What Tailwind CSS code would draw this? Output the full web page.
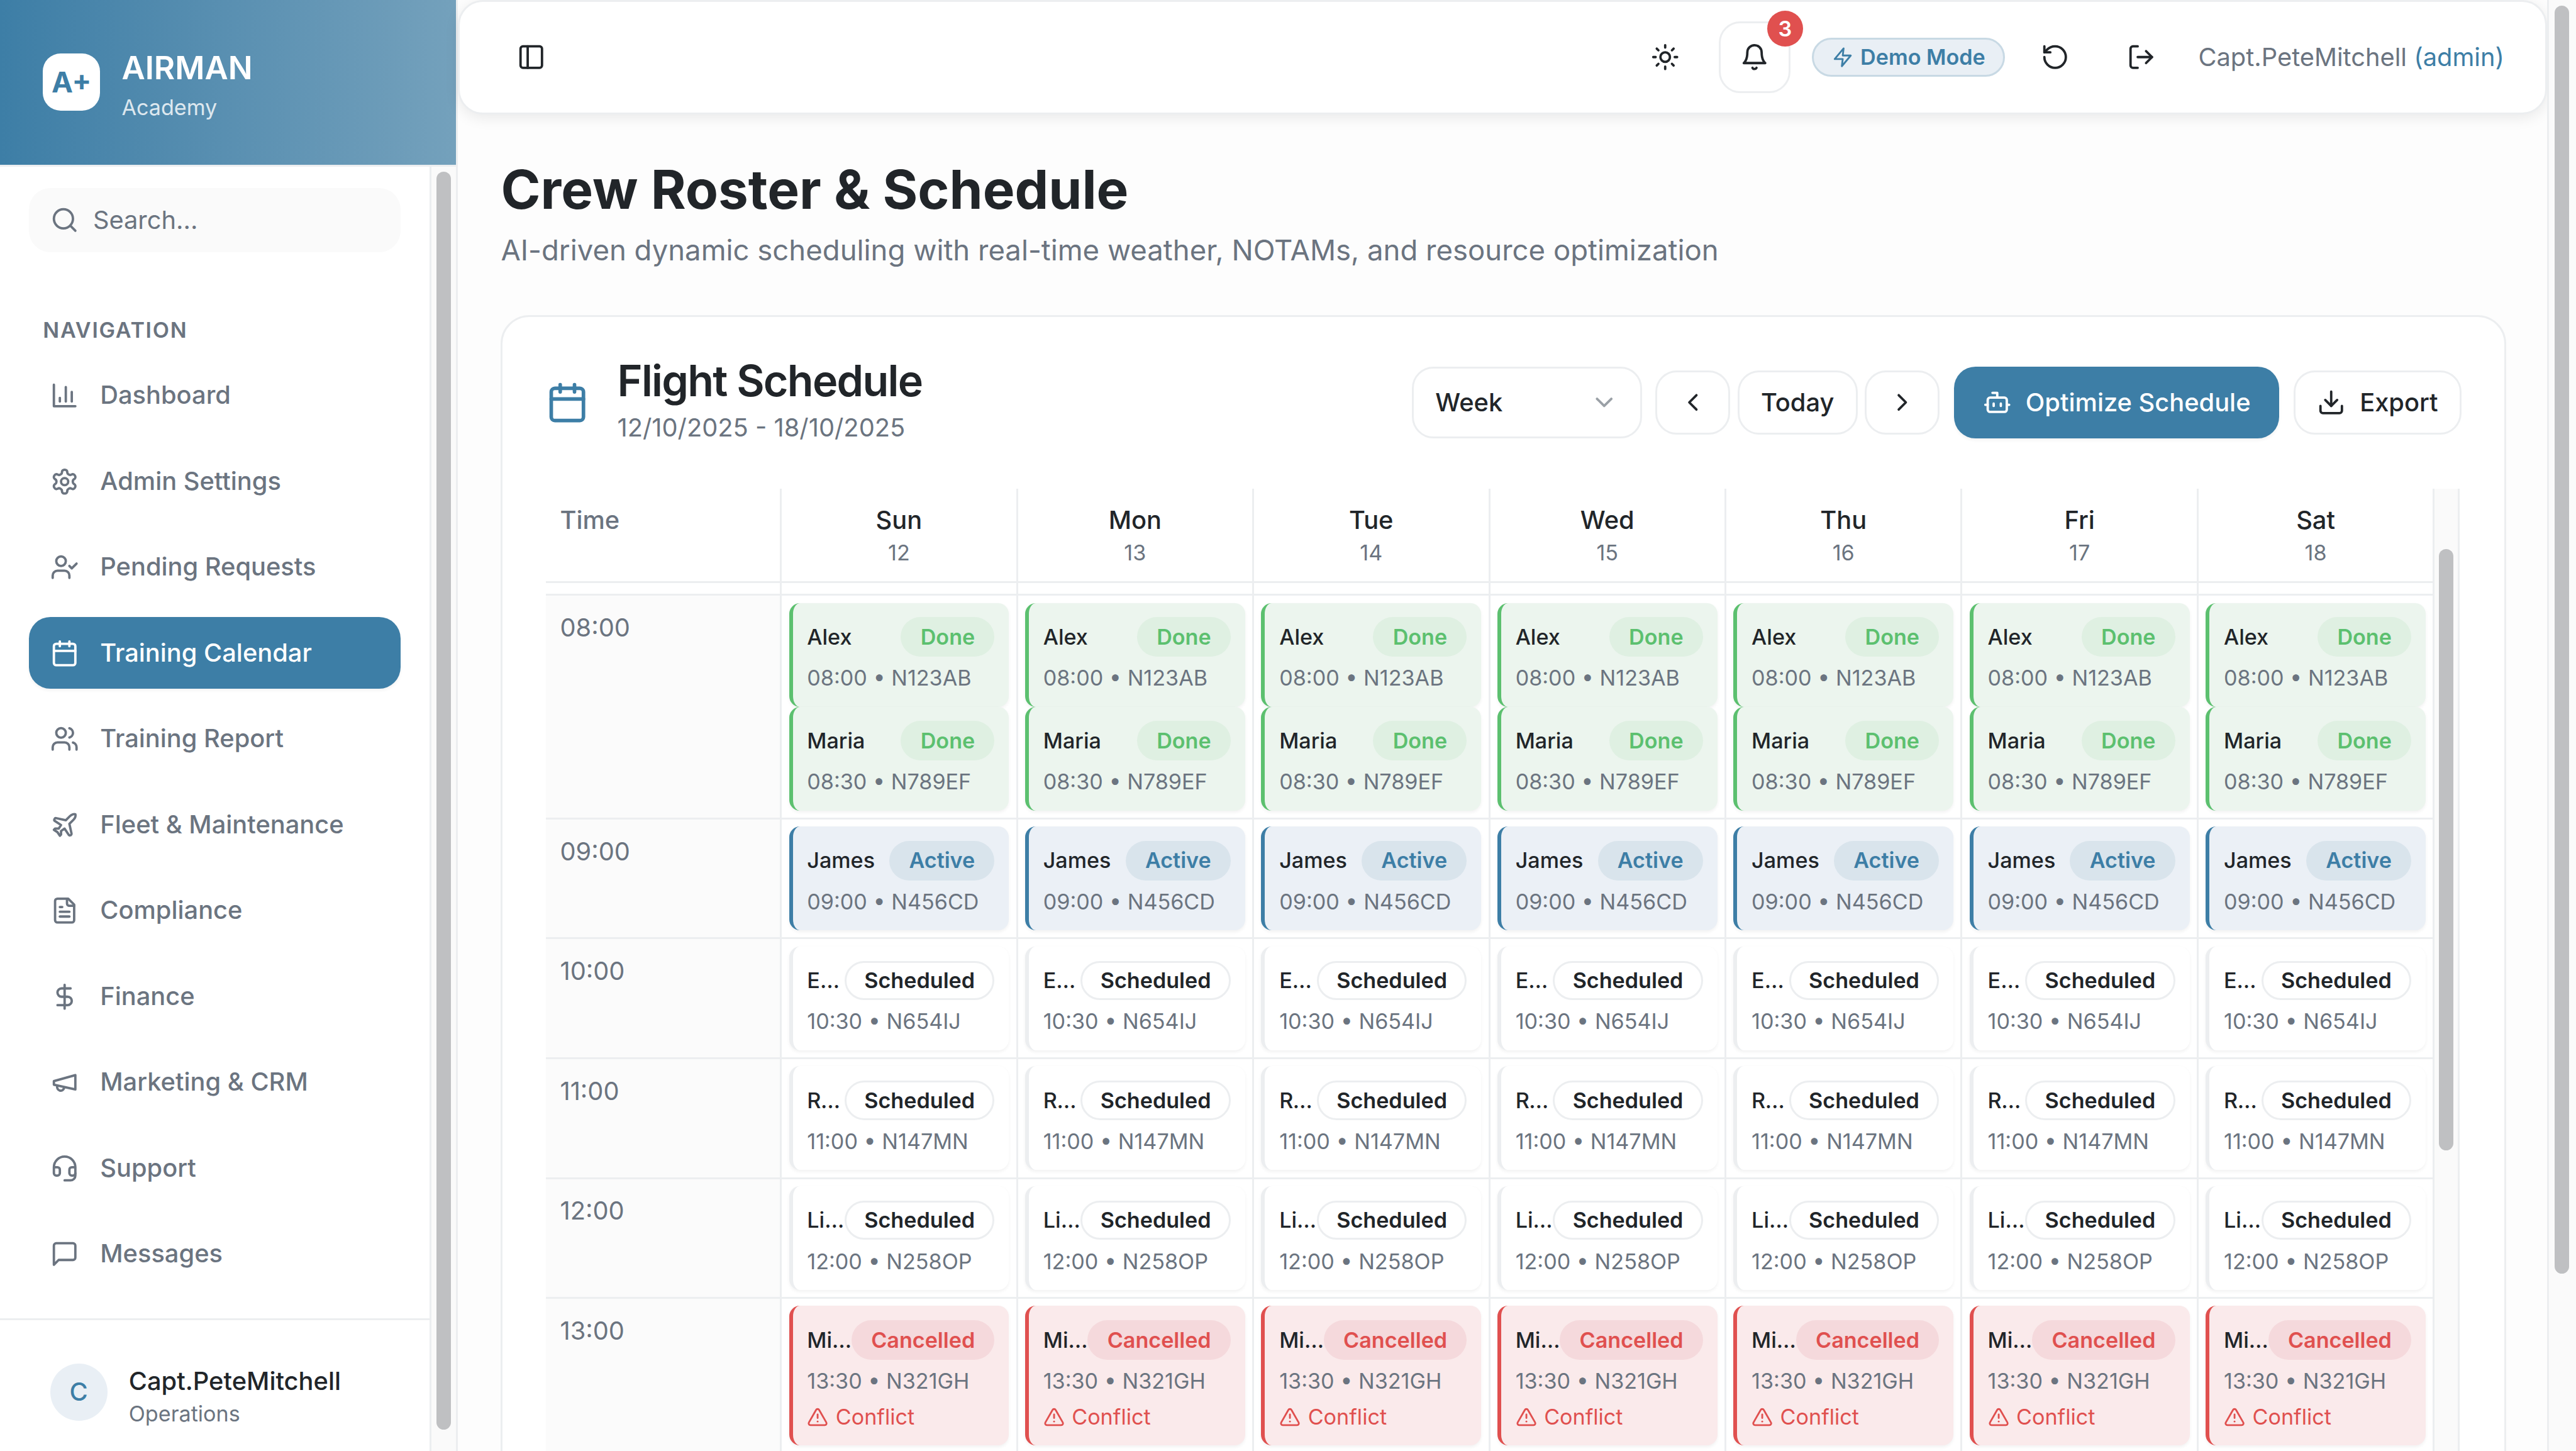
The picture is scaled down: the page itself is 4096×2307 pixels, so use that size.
<!DOCTYPE html>
<html lang="en">
<head>
    <meta charset="UTF-8">
    <meta name="viewport" content="width=device-width, initial-scale=1.0">
    <title>AIRMAN Academy - Crew Roster</title>
    <script src="https://cdn.jsdelivr.net/npm/@tailwindcss/browser@4"></script>
</head>
<body class="overflow-hidden bg-white">

<!-- the design is 1440 wide, zoom brings it up to the 4096 window -->
<div class="flex h-[811px] w-[1440px] overflow-hidden bg-[#fdfdfd] text-[#212529] [font-family:Inter,sans-serif] [zoom:2.84444]">

    <!-- Sidebar -->
    <aside class="flex h-full w-64 shrink-0 flex-col border-r-[1.06px] border-[#eceef0] bg-white">
        <div class="flex h-[92px] shrink-0 items-center gap-3 bg-linear-to-r from-[#3d7ea6] to-[#74a1bc] px-6">
            <div class="flex size-8 items-center justify-center rounded-[10px] bg-white text-base font-bold text-[#3d7ea6]">A+</div>
            <div>
                <div class="text-lg leading-7 font-semibold text-white">AIRMAN</div>
                <div class="text-xs text-white/80">Academy</div>
            </div>
        </div>
        <div class="flex min-h-0 flex-1 border-t-[1.06px] border-[#eceef0]">
            <div class="flex w-[241px] shrink-0 flex-col border-r-[1.06px] border-[#eceef0]">
                <div class="flex-1">
                    <div class="mx-4 mt-3 flex h-9 items-center gap-2 rounded-xl bg-[#fafafa] px-3 text-sm text-[#6b7480]">
                        <svg class="size-4" fill="none" stroke="currentColor" stroke-width="2" stroke-linecap="round" stroke-linejoin="round" viewBox="0 0 24 24"><circle cx="11" cy="11" r="8"/><path d="m21 21-4.3-4.3"/></svg>
                        <span>Search...</span>
                    </div>
                    <div class="mt-[35.6px] mb-[8.4px] pl-6 text-xs font-semibold tracking-wider text-[#6b7480] uppercase">Navigation</div>
                    <nav id="nav" class="mx-4 flex flex-col gap-2"></nav>
                </div>
                <div class="flex h-[74px] shrink-0 items-start gap-3 border-t-[1.06px] border-[#eceef0] pt-6 pl-7">
                    <div class="flex size-8 items-center justify-center rounded-full bg-[#e9eff5] text-sm font-medium text-[#3d7ea6]">C</div>
                    <div>
                        <div class="text-sm font-medium text-[#212529]">Capt.PeteMitchell</div>
                        <div class="text-xs text-[#6b7480]">Operations</div>
                    </div>
                </div>
            </div>
            <div class="w-[14px] bg-[#fafafa] pt-[3px]">
                <div class="ml-[3px] h-[703px] w-2 rounded-full bg-[#bfc0c2]"></div>
            </div>
        </div>
    </aside>

    <!-- Main -->
    <div class="flex min-w-0 flex-1">
        <div class="flex w-[1168px] shrink-0 flex-col">
            <header class="flex h-16 shrink-0 items-center justify-between rounded-[14px] border-[1.06px] border-[#eceef0] bg-white pr-[23px] pl-8 shadow-[0_2px_8px_rgba(0,0,0,0.08)]">
                <svg class="size-4" fill="none" stroke="currentColor" stroke-width="2" stroke-linecap="round" stroke-linejoin="round" viewBox="0 0 24 24"><rect width="18" height="18" x="3" y="3" rx="2"/><path d="M9 3v18"/></svg>
                <div class="flex items-center">
                    <button class="flex size-10 items-center justify-center">
                        <svg class="size-4" fill="none" stroke="currentColor" stroke-width="2" stroke-linecap="round" stroke-linejoin="round" viewBox="0 0 24 24"><circle cx="12" cy="12" r="4"/><path d="M12 2v2M12 20v2M4.93 4.93l1.41 1.41M17.66 17.66l1.41 1.41M2 12h2M20 12h2M6.34 17.66l-1.41 1.41M19.07 4.93l-1.41 1.41"/></svg>
                    </button>
                    <button class="relative ml-[10px] flex size-10 items-center justify-center rounded-xl border-[1.06px] border-[#eceef0]">
                        <svg class="size-4" fill="none" stroke="currentColor" stroke-width="2" stroke-linecap="round" stroke-linejoin="round" viewBox="0 0 24 24"><path d="M6 8a6 6 0 0 1 12 0c0 7 3 9 3 9H3s3-2 3-9"/><path d="M10.3 21a1.94 1.94 0 0 0 3.4 0"/></svg>
                        <span class="absolute -top-[7px] -right-[8px] flex size-5 items-center justify-center rounded-full bg-[#e0504f] text-xs font-semibold text-white">3</span>
                    </button>
                    <div class="ml-3 flex h-[22px] w-[108px] items-center justify-center gap-1 rounded-full border-[1.06px] border-[#c8d9e4] bg-[#e9eff5] text-xs font-semibold text-[#3d7ea6]">
                        <svg class="size-3" fill="none" stroke="currentColor" stroke-width="2" stroke-linecap="round" stroke-linejoin="round" viewBox="0 0 24 24"><polygon points="13 2 3 14 12 14 11 22 21 10 12 10 13 2"/></svg>
                        <span>Demo Mode</span>
                    </div>
                    <button class="ml-2 flex size-10 items-center justify-center">
                        <svg class="size-4" fill="none" stroke="currentColor" stroke-width="2" stroke-linecap="round" stroke-linejoin="round" viewBox="0 0 24 24"><path d="M3 12a9 9 0 1 0 9-9 9.75 9.75 0 0 0-6.74 2.74L3 8"/><path d="M3 3v5h5"/></svg>
                    </button>
                    <button class="ml-2 flex size-10 items-center justify-center">
                        <svg class="size-4" fill="none" stroke="currentColor" stroke-width="2" stroke-linecap="round" stroke-linejoin="round" viewBox="0 0 24 24"><path d="M9 21H5a2 2 0 0 1-2-2V5a2 2 0 0 1 2-2h4"/><polyline points="16 17 21 12 16 7"/><line x1="21" x2="9" y1="12" y2="12"/></svg>
                    </button>
                    <div class="ml-3 text-sm text-[#6b7480]">Capt.PeteMitchell <span class="text-[#3d7ea6]">(admin)</span></div>
                </div>
            </header>

            <main class="min-h-0 flex-1 overflow-hidden pt-6 pr-[23px] pl-6">
                <h1 class="text-3xl font-bold text-[#212529]">Crew Roster &amp; Schedule</h1>
                <p class="mt-1 mb-6 text-base text-[#6b7480]">AI-driven dynamic scheduling with real-time weather, NOTAMs, and resource optimization</p>

                <section class="rounded-2xl border-[1.06px] border-[#eceef0] bg-white px-6 pt-7 pb-6">
                    <div class="flex h-10 items-center justify-between">
                        <div class="flex items-center gap-4">
                            <svg class="size-6 text-[#3d7ea6]" fill="none" stroke="currentColor" stroke-width="2" stroke-linecap="round" stroke-linejoin="round" viewBox="0 0 24 24"><rect width="18" height="18" x="3" y="4" rx="2"/><path d="M16 2v4M8 2v4M3 10h18"/></svg>
                            <div class="-mt-1">
                                <h2 class="text-2xl font-semibold tracking-tight">Flight Schedule</h2>
                                <div class="text-sm text-[#6b7480]">12/10/2025 - 18/10/2025</div>
                            </div>
                        </div>
                        <div class="flex items-center text-sm font-medium">
                            <div class="flex h-10 w-[128.5px] items-center justify-between rounded-xl border-[1.06px] border-[#eceef0] bg-white px-3">
                                <span>Week</span>
                                <svg class="size-4 text-[#9aa0a6]" fill="none" stroke="currentColor" stroke-width="2" stroke-linecap="round" stroke-linejoin="round" viewBox="0 0 24 24"><path d="m6 9 6 6 6-6"/></svg>
                            </div>
                            <button class="ml-[7.5px] flex h-9 w-[42px] items-center justify-center rounded-xl border-[1.06px] border-[#eceef0] bg-white">
                                <svg class="size-4" fill="none" stroke="currentColor" stroke-width="2" stroke-linecap="round" stroke-linejoin="round" viewBox="0 0 24 24"><path d="m15 18-6-6 6-6"/></svg>
                            </button>
                            <button class="ml-1 h-9 rounded-xl border-[1.06px] border-[#eceef0] bg-white px-3">Today</button>
                            <button class="ml-1 flex h-9 w-[42px] items-center justify-center rounded-xl border-[1.06px] border-[#eceef0] bg-white">
                                <svg class="size-4" fill="none" stroke="currentColor" stroke-width="2" stroke-linecap="round" stroke-linejoin="round" viewBox="0 0 24 24"><path d="m9 18 6-6-6-6"/></svg>
                            </button>
                            <button class="ml-2 flex h-10 items-center gap-2 rounded-xl bg-[#3d7ea6] px-4 text-white shadow-[0_1px_2px_rgba(0,0,0,0.05)]">
                                <svg class="size-4" fill="none" stroke="currentColor" stroke-width="2" stroke-linecap="round" stroke-linejoin="round" viewBox="0 0 24 24"><path d="M12 8V4H8"/><rect width="16" height="12" x="4" y="8" rx="2"/><path d="M2 14h2M20 14h2M15 13v2M9 13v2"/></svg>
                                <span>Optimize Schedule</span>
                            </button>
                            <button class="ml-2 flex h-9 items-center gap-2 rounded-xl border-[1.06px] border-[#eceef0] bg-white px-3">
                                <svg class="size-4" fill="none" stroke="currentColor" stroke-width="2" stroke-linecap="round" stroke-linejoin="round" viewBox="0 0 24 24"><path d="M21 15v4a2 2 0 0 1-2 2H5a2 2 0 0 1-2-2v-4"/><polyline points="7 10 12 15 17 10"/><line x1="12" x2="12" y1="15" y2="3"/></svg>
                                <span>Export</span>
                            </button>
                        </div>
                    </div>

                    <div class="mt-7 flex">
                        <div id="schedule" class="grid w-[1056px] shrink-0 grid-cols-[repeat(8,132px)]"></div>
                        <div class="w-[14px] shrink-0 border-r-[1.06px] border-[#eceef0] bg-[#fafafa] pt-[34px]">
                            <div class="mx-auto h-[336px] w-2 rounded-full bg-[#bfc0c2]"></div>
                        </div>
                    </div>
                </section>
            </main>
        </div>

        <!-- page scrollbar -->
        <div class="w-4 shrink-0 border-l-[1.06px] border-[#eceef0] bg-[#fafafa] pt-[3px]">
            <div class="ml-[3px] h-[709px] w-2 rounded-full bg-[#bfc0c2]"></div>
        </div>
    </div>
</div>

<script>
    // --- Sidebar nav ---
    const navItems = [
        ['Dashboard', '<path d="M3 3v18h18"/><path d="M18 17V9"/><path d="M13 17V5"/><path d="M8 17v-3"/>'],
        ['Admin Settings', '<path d="M12.22 2h-.44a2 2 0 0 0-2 2v.18a2 2 0 0 1-1 1.73l-.43.25a2 2 0 0 1-2 0l-.15-.08a2 2 0 0 0-2.73.73l-.22.38a2 2 0 0 0 .73 2.73l.15.1a2 2 0 0 1 1 1.72v.51a2 2 0 0 1-1 1.74l-.15.09a2 2 0 0 0-.73 2.73l.22.38a2 2 0 0 0 2.73.73l.15-.08a2 2 0 0 1 2 0l.43.25a2 2 0 0 1 1 1.73V20a2 2 0 0 0 2 2h.44a2 2 0 0 0 2-2v-.18a2 2 0 0 1 1-1.73l.43-.25a2 2 0 0 1 2 0l.15.08a2 2 0 0 0 2.73-.73l.22-.39a2 2 0 0 0-.73-2.73l-.15-.08a2 2 0 0 1-1-1.74v-.5a2 2 0 0 1 1-1.74l.15-.09a2 2 0 0 0 .73-2.73l-.22-.38a2 2 0 0 0-2.73-.73l-.15.08a2 2 0 0 1-2 0l-.43-.25a2 2 0 0 1-1-1.73V4a2 2 0 0 0-2-2z"/><circle cx="12" cy="12" r="3"/>'],
        ['Pending Requests', '<path d="M16 21v-2a4 4 0 0 0-4-4H6a4 4 0 0 0-4 4v2"/><circle cx="9" cy="7" r="4"/><polyline points="16 11 18 13 22 9"/>'],
        ['Training Calendar', '<rect width="18" height="18" x="3" y="4" rx="2"/><path d="M16 2v4M8 2v4M3 10h18"/>'],
        ['Training Report', '<path d="M16 21v-2a4 4 0 0 0-4-4H6a4 4 0 0 0-4 4v2"/><circle cx="9" cy="7" r="4"/><path d="M22 21v-2a4 4 0 0 0-3-3.87"/><path d="M16 3.13a4 4 0 0 1 0 7.75"/>'],
        ['Fleet &amp; Maintenance', '<path d="M17.8 19.2 16 11l3.5-3.5C21 6 21.5 4 21 3c-1-.5-3 0-4.5 1.5L13 8 4.8 6.2c-.5-.1-.9.1-1.1.5l-.3.5c-.2.5-.1 1 .3 1.3L9 12l-2 3H4l-1 1 3 2 2 3 1-1v-3l3-2 3.5 5.3c.3.4.8.5 1.3.3l.5-.2c.4-.3.6-.7.5-1.2z"/>'],
        ['Compliance', '<path d="M15 2H6a2 2 0 0 0-2 2v16a2 2 0 0 0 2 2h12a2 2 0 0 0 2-2V7Z"/><path d="M14 2v4a2 2 0 0 0 2 2h4"/><path d="M10 9H8"/><path d="M16 13H8"/><path d="M16 17H8"/>'],
        ['Finance', '<line x1="12" x2="12" y1="2" y2="22"/><path d="M17 5H9.5a3.5 3.5 0 0 0 0 7h5a3.5 3.5 0 0 1 0 7H6"/>'],
        ['Marketing &amp; CRM', '<path d="m3 11 18-5v12L3 14v-3z"/><path d="M11.6 16.8a3 3 0 1 1-5.8-1.6"/>'],
        ['Support', '<path d="M3 11h3a2 2 0 0 1 2 2v3a2 2 0 0 1-2 2H5a2 2 0 0 1-2-2v-5Zm0 0a9 9 0 1 1 18 0m0 0v5a2 2 0 0 1-2 2h-1a2 2 0 0 1-2-2v-3a2 2 0 0 1 2-2h3Z"/><path d="M21 16v2a4 4 0 0 1-4 4h-5"/>'],
        ['Messages', '<path d="M21 15a2 2 0 0 1-2 2H7l-4 4V5a2 2 0 0 1 2-2h14a2 2 0 0 1 2 2z"/>'],
    ];

    document.getElementById('nav').innerHTML = navItems.map(([label, icon]) => {
        const look = label === 'Training Calendar'
            ? 'bg-[#3d7ea6] text-white shadow-[0_1px_2px_rgba(0,0,0,0.05)]'
            : 'text-[#6b7480]';
        return `<a class="flex h-10 items-center gap-3 rounded-xl px-3 text-sm font-medium ${look}">
            <svg class="size-4 shrink-0" fill="none" stroke="currentColor" stroke-width="2" stroke-linecap="round" stroke-linejoin="round" viewBox="0 0 24 24">${icon}</svg>
            <span>${label}</span></a>`;
    }).join('');

    // --- Schedule grid ---
    const days = [['Sun', 12], ['Mon', 13], ['Tue', 14], ['Wed', 15], ['Thu', 16], ['Fri', 17], ['Sat', 18]];

    const statusStyles = {
        Done: { card: 'border-l-[#5cc06f] bg-[#ecf5ee]', badge: 'px-[11px] bg-[#dff0e2] text-[#5cc06f]' },
        Active: { card: 'border-l-[#3d7ea6] bg-[#ebf0f6]', badge: 'px-[11px] bg-[#d9e4ec] text-[#3d7ea6]' },
        Scheduled: { card: 'border-l-[#eceef0] bg-white', badge: 'px-[10px] border-[1.06px] border-[#eceef0] bg-white text-[#212529]' },
        Cancelled: { card: 'border-l-[#e0504f] bg-[#faeaeb]', badge: 'px-[11px] bg-[#f5d9dc] text-[#e0504f]' },
    };

    const rows = [
        ['08:00', 'h-[125px]', [['Alex', 'Done', '08:00 • N123AB'], ['Maria', 'Done', '08:30 • N789EF']]],
        ['09:00', 'h-[67px]', [['James', 'Active', '09:00 • N456CD']]],
        ['10:00', 'h-[67px]', [['Emma', 'Scheduled', '10:30 • N654IJ']]],
        ['11:00', 'h-[67px]', [['Robert', 'Scheduled', '11:00 • N147MN']]],
        ['12:00', 'h-[67px]', [['Lisa', 'Scheduled', '12:00 • N258OP']]],
        ['13:00', 'h-[87px]', [['Mike', 'Cancelled', '13:30 • N321GH', true]]],
    ];

    const conflictTag = `<div class="mt-1 flex items-center gap-1 text-xs text-[#e0504f]">
        <svg class="size-3" fill="none" stroke="currentColor" stroke-width="2" stroke-linecap="round" stroke-linejoin="round" viewBox="0 0 24 24"><path d="m21.73 18-8-14a2 2 0 0 0-3.48 0l-8 14A2 2 0 0 0 4 21h16a2 2 0 0 0 1.73-3"/><path d="M12 9v4"/><path d="M12 17h.01"/></svg>
        <span>Conflict</span></div>`;

    function flightCard([name, status, meta, conflict]) {
        const style = statusStyles[status];
        return `<div class="rounded-md border-l-[2.11px] p-2 shadow-[0_1px_2px_rgba(0,0,0,0.05)] ${style.card}">
            <div class="flex h-[22px] items-center justify-between">
                <span class="-mr-[2px] min-w-0 truncate text-xs font-medium text-[#212529]">${name}</span>
                <span class="flex h-[22px] shrink-0 items-center rounded-full text-xs font-semibold ${style.badge}">${status}</span>
            </div>
            <div class="mt-1 text-xs text-[#6b7480]">${meta}</div>
            ${conflict ? conflictTag : ''}
        </div>`;
    }

    let html = `<div class="h-[53px] border-r-[1.06px] border-b-[1.06px] border-[#eceef0] p-2 text-sm font-medium text-[#6b7480]">Time</div>`;
    html += days.map(([day, date]) => `<div class="h-[53px] border-r-[1.06px] border-b-[1.06px] border-[#eceef0] p-2 text-center">
        <div class="text-sm font-medium">${day}</div><div class="text-xs text-[#6b7480]">${date}</div></div>`).join('');
    html += `<div class="h-[7px] border-r-[1.06px] border-b-[1.06px] border-[#eceef0]"></div>`.repeat(8);

    rows.forEach(([time, height, items]) => {
        html += `<div class="${height} border-r-[1.06px] border-b-[1.06px] border-[#eceef0] bg-[#fbfbfb] p-2 text-sm text-[#6b7480]">${time}</div>`;
        const cell = `<div class="${height} border-r-[1.06px] border-b-[1.06px] border-[#eceef0] p-1">${items.map(flightCard).join('')}</div>`;
        html += cell.repeat(7);
    });

    document.getElementById('schedule').innerHTML = html;
</script>

</body>
</html>
